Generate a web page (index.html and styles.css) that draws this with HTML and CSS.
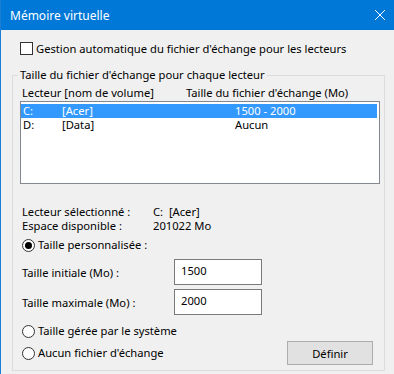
FILE: index.html
```html
<!DOCTYPE html>
<html lang="fr">
<head>
<meta charset="utf-8">
<title>Mémoire virtuelle</title>
<link rel="stylesheet" href="styles.css">
</head>
<body>
<div class="window">
  <div class="titlebar">
    <span class="title">Mémoire virtuelle</span>
    <svg class="close" width="12" height="12" viewBox="0 0 12 12"><path d="M1 1 L11 11 M11 1 L1 11" stroke="#fff" stroke-width="1" fill="none"/></svg>
  </div>
  <div class="content">
    <label class="check-row"><span class="checkbox"></span><span>Gestion automatique du fichier d'échange pour les lecteurs</span></label>
    <fieldset class="group">
      <legend>Taille du fichier d'échange pour chaque lecteur</legend>
      <div class="headers"><span class="h1">Lecteur [nom de volume]</span><span>Taille du fichier d'échange (Mo)</span></div>
      <div class="listbox">
        <div class="lrow selected"><span class="c1">C:</span><span class="c2">[Acer]</span><span>1500 - 2000</span></div>
        <div class="lrow"><span class="c1">D:</span><span class="c2">[Data]</span><span>Aucun</span></div>
      </div>
      <div class="info">
        <div class="irow"><span class="ilabel">Lecteur sélectionné :</span><span>C:&nbsp; [Acer]</span></div>
        <div class="irow"><span class="ilabel">Espace disponible :</span><span>201022 Mo</span></div>
      </div>
      <label class="radio-row first"><span class="radio checked"></span><span>Taille personnalisée :</span></label>
      <div class="field-row"><span class="flabel">Taille initiale (Mo) :</span><span class="input">1500</span></div>
      <div class="field-row second"><span class="flabel">Taille maximale (Mo) :</span><span class="input">2000</span></div>
      <div class="bottom">
        <div class="radios">
          <label class="radio-row"><span class="radio"></span><span>Taille gérée par le système</span></label>
          <label class="radio-row"><span class="radio"></span><span>Aucun fichier d'échange</span></label>
        </div>
        <button class="btn">Définir</button>
      </div>
    </fieldset>
  </div>
</div>
</body>
</html>
```
FILE: styles.css
```css
html, body {
  margin: 0;
  padding: 0;
}
body {
  width: 394px;
  height: 374px;
  overflow: hidden;
  background: #f0f0f0;
  font-family: "Noto Sans", "DejaVu Sans", sans-serif;
  font-size: 11.2px;
  color: #000;
}
.window {
  height: 374px;
  box-sizing: border-box;
  border-left: 1px solid #1a7fd4;
}
.titlebar {
  height: 30px;
  background: #0078d7;
  color: #fff;
  display: flex;
  align-items: center;
  justify-content: space-between;
  padding: 0 8px 0 9px;
}
.title {
  font-size: 12px;
}
.close {
  display: block;
}
.content {
  padding: 12px 0 0 11px;
}
.check-row {
  display: flex;
  align-items: center;
  gap: 3px;
  height: 13px;
  margin-left: 8px;
  line-height: 13px;
}
.checkbox {
  width: 11px;
  height: 11px;
  border: 1px solid #333;
  background: #fff;
  flex: none;
}
.group {
  margin: 12px 0 0 0;
  padding: 0 0 0 9px;
  width: 373px;
  height: 304px;
  box-sizing: border-box;
  border: 1px solid #dcdcdc;
  min-width: 0;
}
.group legend {
  padding: 0 2px;
  margin-left: -4px;
  line-height: 16px;
}
.headers {
  display: flex;
  line-height: 16px;
  margin-top: 2px;
}
.h1 {
  width: 164px;
}
.listbox {
  margin-left: -2px;
  width: 360px;
  height: 83px;
  box-sizing: border-box;
  border: 1px solid #828790;
  background: #fff;
  padding: 2px 2px 0 0;
}
.lrow {
  display: flex;
  height: 14px;
  line-height: 14px;
  padding-left: 2px;
}
.lrow.selected {
  background: #3399ff;
  color: #fff;
}
.c1 {
  width: 39px;
}
.c2 {
  width: 173px;
}
.info {
  margin-top: 21px;
}
.irow {
  display: flex;
  height: 14px;
  line-height: 14px;
}
.ilabel {
  width: 131px;
}
.radio-row {
  display: flex;
  align-items: center;
  gap: 3px;
  height: 14px;
  line-height: 14px;
}
.radio-row.first {
  margin-top: 5px;
}
.radio {
  width: 11px;
  height: 11px;
  border: 1px solid #333;
  border-radius: 50%;
  background: #fff;
  flex: none;
  display: flex;
  align-items: center;
  justify-content: center;
}
.radio.checked::after {
  content: "";
  width: 7px;
  height: 7px;
  border-radius: 50%;
  background: #000;
}
.field-row {
  display: flex;
  align-items: center;
  height: 26px;
  margin-top: 7px;
}
.field-row.second {
  margin-top: 4px;
}
.flabel {
  width: 152px;
}
.input {
  width: 88px;
  height: 26px;
  box-sizing: border-box;
  border: 1px solid #7a7a7a;
  background: #fff;
  padding: 3px 0 0 6px;
  line-height: 16px;
}
.bottom {
  display: flex;
  align-items: flex-start;
  margin-top: 9px;
}
.radios {
  display: flex;
  flex-direction: column;
  gap: 8px;
  width: 265px;
}
.btn {
  margin-top: 17px;
  width: 86px;
  height: 24px;
  box-sizing: border-box;
  border: 1px solid #adadad;
  background: #e1e1e1;
  font-family: inherit;
  font-size: 11.2px;
  color: #000;
  padding: 0;
}
```
